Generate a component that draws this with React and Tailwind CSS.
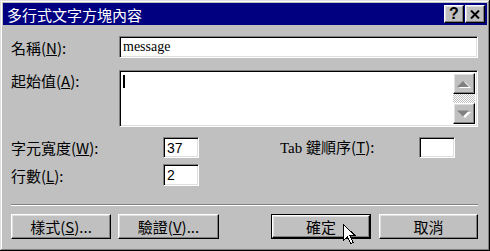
import React from 'react';

const cjk = { fontFamily: '"Noto Sans CJK TC", "Noto Sans", sans-serif' };

const raised =
  'bg-[#c0c0c0] border border-t-white border-l-white border-r-black border-b-black shadow-[inset_-1px_-1px_#808080,inset_1px_1px_#dfdfdf]';
const sunken =
  'bg-white border border-t-[#808080] border-l-[#808080] border-r-white border-b-white shadow-[inset_1px_1px_#000,inset_-1px_-1px_#dfdfdf]';

const Key = ({ k }) => (
  <>
    (<span className="underline underline-offset-1">{k}</span>)
  </>
);

const Label = ({ children, className = '' }) => (
  <span className={`text-[15px] leading-none text-black ${className}`} style={cjk}>
    {children}
  </span>
);

const Arrow = ({ up }) => (
  <svg width="14" height="8" viewBox="0 0 14 8">
    {up ? (
      <>
        <path d="M1 8 L13 8 L7 2 Z" fill="#fff" transform="translate(1 0)" />
        <path d="M0 7 L12 7 L6 1 Z" fill="#808080" />
      </>
    ) : (
      <>
        <path d="M1 1 L13 1 L7 7 Z" fill="#fff" transform="translate(1 1)" />
        <path d="M0 0.5 L12 0.5 L6 6.5 Z" fill="#808080" />
      </>
    )}
  </svg>
);

const Button = ({ children, def, className = '' }) =>
  def ? (
    <div className={`h-[25px] border border-black ${className}`}>
      <div className={`${raised} h-full flex items-center justify-center`}>
        <Label>{children}</Label>
      </div>
    </div>
  ) : (
    <div className={`${raised} h-[25px] flex items-center justify-center ${className}`}>
      <Label>{children}</Label>
    </div>
  );

export default function App() {
  return (
    <div className="relative w-[490px] h-[251px] bg-[#c0c0c0] p-[3px] flex flex-col shadow-[inset_-1px_-1px_#000,inset_1px_1px_#dfdfdf,inset_-2px_-2px_#808080,inset_2px_2px_#fff]">
      {/* title bar */}
      <div className="h-[22px] bg-[#000080] flex items-center justify-between pl-[4px] pr-[2px]">
        <span className="text-white text-[15px] leading-none" style={cjk}>
          多行式文字方塊內容
        </span>
        <div className="flex gap-[1px]">
          <div className={`${raised} w-[20px] h-[18px] flex items-center justify-center`}>
            <span className="text-[16px] font-bold leading-none text-black" style={{ fontFamily: '"Liberation Sans", sans-serif' }}>
              ?
            </span>
          </div>
          <div className={`${raised} w-[20px] h-[18px] flex items-center justify-center`}>
            <svg width="10" height="9" viewBox="0 0 10 9">
              <path d="M1 0.5 L9 8.5 M9 0.5 L1 8.5" stroke="#000" strokeWidth="2" />
            </svg>
          </div>
        </div>
      </div>

      {/* body */}
      <div className="flex flex-col pl-[8px] pr-[9px]">
        <div className="flex items-center h-[22px] mt-[11px]">
          <Label className="w-[108px]">
            名稱<Key k="N" />:
          </Label>
          <div className={`${sunken} flex-1 h-full flex items-center pl-[3px]`}>
            <span className="text-[14px] leading-none text-black" style={{ fontFamily: '"Liberation Serif", serif' }}>
              message
            </span>
          </div>
        </div>

        <div className="flex mt-[12px] h-[57px]">
          <Label className="w-[108px] pt-[3px]">
            起始值<Key k="A" />:
          </Label>
          <div className={`${sunken} flex-1 h-full flex p-[2px]`}>
            <div className="flex-1 pl-[1px] pt-[2px]">
              <div className="w-[2px] h-[13px] bg-black" />
            </div>
            <div className="w-[22px] flex flex-col">
              <div className={`${raised} h-[21px] flex items-center justify-center`}>
                <Arrow up />
              </div>
              <div className="flex-1 bg-[repeating-conic-gradient(#c0c0c0_0%_25%,#fff_0%_50%)] bg-size-[2px_2px]" />
              <div className={`${raised} h-[21px] flex items-center justify-center`}>
                <Arrow />
              </div>
            </div>
          </div>
        </div>

        <div className="flex items-center h-[21px] mt-[10px]">
          <Label className="w-[152px]">
            字元寬度<Key k="W" />:
          </Label>
          <div className={`${sunken} w-[36px] h-full flex items-center pl-[3px]`}>
            <span className="text-[14px] leading-none text-black" style={{ fontFamily: '"Liberation Sans", sans-serif' }}>
              37
            </span>
          </div>
          <Label className="ml-[81px] w-[139px]">
            <span style={{ fontFamily: '"Liberation Serif", serif' }}>Tab </span>鍵順序<Key k="T" />:
          </Label>
          <div className={`${sunken} w-[36px] h-full`} />
        </div>

        <div className="flex items-center h-[22px] mt-[6px]">
          <Label className="w-[152px]">
            行數<Key k="L" />:
          </Label>
          <div className={`${sunken} w-[36px] h-full flex items-center pl-[3px]`}>
            <span className="text-[14px] leading-none text-black" style={{ fontFamily: '"Liberation Sans", sans-serif' }}>
              2
            </span>
          </div>
        </div>

        <div className="mt-[18px] h-[2px] border-t border-t-[#808080] border-b border-b-white" />

        <div className="flex mt-[8px]">
          <Button className="w-[100px]">
            樣式<Key k="S" />...
          </Button>
          <Button className="w-[101px] ml-[7px]">
            驗證<Key k="V" />...
          </Button>
          <Button def className="w-[100px] ml-[52px]">
            確定
          </Button>
          <Button className="w-[99px] ml-[8px]">取消</Button>
        </div>
      </div>

      {/* mouse pointer */}
      <svg className="absolute left-[343px] top-[224px]" width="13" height="21" viewBox="0 0 13 21">
        <path
          d="M0.5 0.5 L0.5 16.5 L4.5 12.5 L7.5 19.5 L10 18.5 L7 11.5 L12 11.5 Z"
          fill="#fff"
          stroke="#000"
          strokeWidth="1"
          shapeRendering="crispEdges"
        />
      </svg>
    </div>
  );
}
